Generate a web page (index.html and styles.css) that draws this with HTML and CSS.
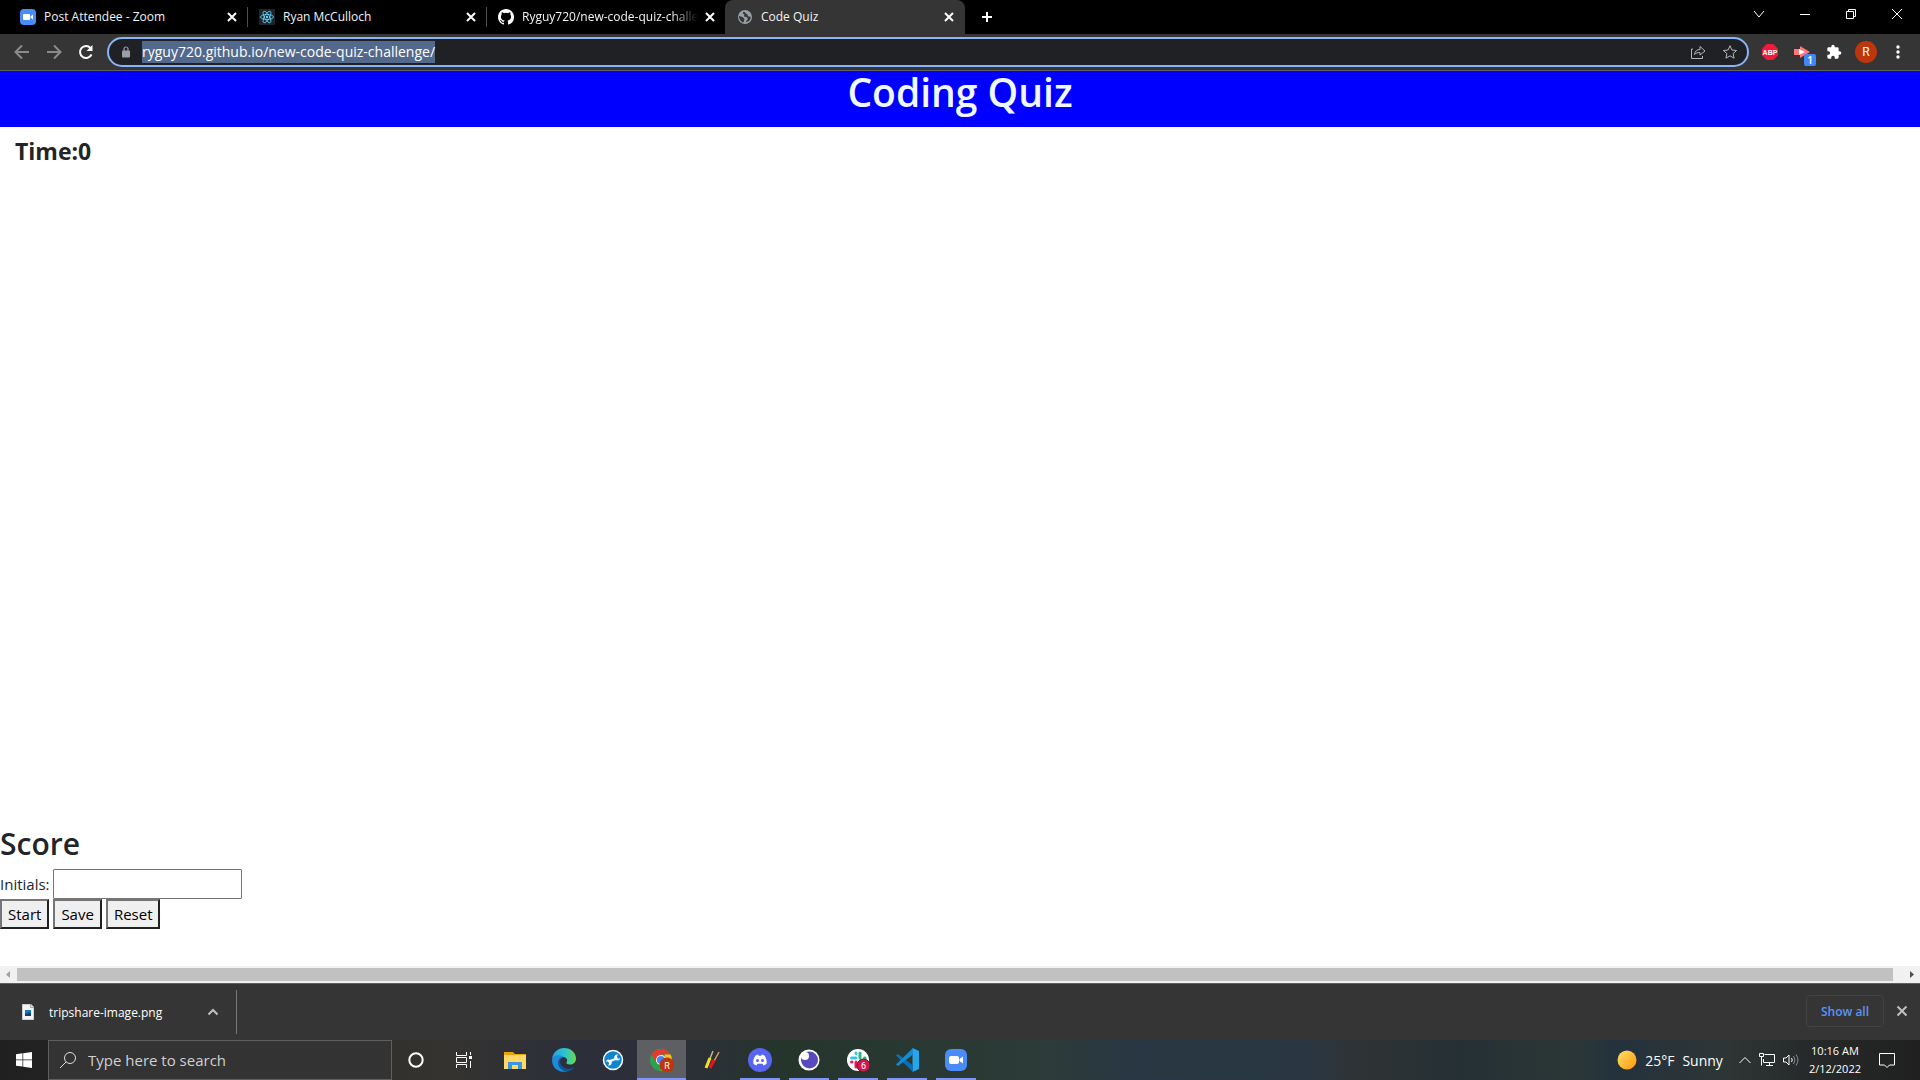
FILE: index.html
```html
<!DOCTYPE html>
<html lang="en">
<head>
<meta charset="utf-8">
<title>Code Quiz</title>
<link rel="stylesheet" href="styles.css">
</head>
<body>
<div class="desktop">
  <header class="browser">
    <div class="tabstrip">
      <div class="tab">
        <svg class="favicon" viewBox="0 0 16 16"><rect width="16" height="16" rx="4" fill="#4a8cf7"/><rect x="3" y="5" width="7" height="6" rx="1" fill="#fff"/><path d="M10.500 7.500 13 5.500v5l-2.500-2z" fill="#fff"/></svg>
        <span class="tab-title">Post Attendee - Zoom</span>
        <button class="icon-btn tab-close" aria-label="Close tab"><svg viewBox="0 0 10 10"><path d="M1 1l8 8M9 1 1 9"/></svg></button>
      </div>
      <div class="tab divided">
        <svg class="favicon" viewBox="0 0 16 16"><rect width="16" height="16" rx="1" fill="#20232a"/><g fill="none" stroke="#61dafb" stroke-width=".8"><ellipse cx="8" cy="8" rx="6.500" ry="2.500"/><ellipse cx="8" cy="8" rx="6.500" ry="2.500" transform="rotate(60 8 8)"/><ellipse cx="8" cy="8" rx="6.500" ry="2.500" transform="rotate(120 8 8)"/></g><circle cx="8" cy="8" r="1.200" fill="#61dafb"/></svg>
        <span class="tab-title">Ryan McCulloch</span>
        <button class="icon-btn tab-close" aria-label="Close tab"><svg viewBox="0 0 10 10"><path d="M1 1l8 8M9 1 1 9"/></svg></button>
      </div>
      <div class="tab divided">
        <svg class="favicon" viewBox="0 0 16 16"><path fill="#fff" d="M8 0C3.580 0 0 3.580 0 8c0 3.540 2.290 6.530 5.470 7.590.4.070.55-.17.55-.38 0-.19-.01-.82-.01-1.490-2.010.37-2.530-.49-2.690-.94-.09-.23-.48-.94-.82-1.130-.28-.15-.68-.52-.01-.53.63-.01 1.080.58 1.230.82.72 1.210 1.870.87 2.330.66.07-.52.28-.87.51-1.070-1.780-.2-3.640-.89-3.640-3.950 0-.87.31-1.590.82-2.150-.08-.2-.36-1.020.08-2.120 0 0 .67-.21 2.200.82a7.600 7.600 0 0 1 4 0c1.530-1.040 2.200-.82 2.200-.82.44 1.100.16 1.920.08 2.120.51.56.82 1.270.82 2.150 0 3.070-1.870 3.750-3.650 3.950.29.25.54.73.54 1.480 0 1.070-.01 1.930-.01 2.200 0 .21.15.46.55.38A8 8 0 0 0 16 8c0-4.420-3.580-8-8-8z"/></svg>
        <span class="tab-title faded">Ryguy720/new-code-quiz-challen</span>
        <button class="icon-btn tab-close" aria-label="Close tab"><svg viewBox="0 0 10 10"><path d="M1 1l8 8M9 1 1 9"/></svg></button>
      </div>
      <div class="tab active">
        <svg class="favicon" viewBox="0 0 16 16"><circle cx="8" cy="8" r="7" fill="#9aa0a6"/><path d="M7 2.500C5 4 6 5 7.500 5.500 6.500 7 7 8 9 8c1.500 0 2 1 1.500 2.500L8.500 13c4 0 5.500-3 5-5.500-2 .5-3-.5-3-2L9 4.500zM2 7l3.500 1 2 2-1 3.500C4 13 2 10 2 7z" fill="#35363a"/></svg>
        <span class="tab-title">Code Quiz</span>
        <button class="icon-btn tab-close" aria-label="Close tab"><svg viewBox="0 0 10 10"><path d="M1 1l8 8M9 1 1 9"/></svg></button>
      </div>
      <button class="icon-btn new-tab" aria-label="New tab"><svg viewBox="0 0 12 12"><path d="M6 1v10M1 6h10"/></svg></button>
      <div class="window-controls">
        <button class="icon-btn" aria-label="Search tabs"><svg viewBox="0 0 12 12"><path d="M1 3l5 6 5-6"/></svg></button>
        <button class="icon-btn" aria-label="Minimize"><svg viewBox="0 0 12 12"><path d="M1 6.500h10"/></svg></button>
        <button class="icon-btn" aria-label="Restore"><svg viewBox="0 0 12 12"><path d="M1.500 3.500h7v7h-7zM3.500 3v-1.500h7v7H9"/></svg></button>
        <button class="icon-btn" aria-label="Close"><svg viewBox="0 0 12 12"><path d="M1 1l10 10M11 1 1 11"/></svg></button>
      </div>
    </div>
    <div class="toolbar">
      <button class="icon-btn nav dim" aria-label="Back"><svg viewBox="0 0 16 16"><path d="M15 8H2M8 1.500 1.500 8 8 14.500"/></svg></button>
      <button class="icon-btn nav dim" aria-label="Forward"><svg viewBox="0 0 16 16"><path d="M1 8h13M8 1.500 14.500 8 8 14.500"/></svg></button>
      <button class="icon-btn nav" aria-label="Reload"><svg viewBox="0 0 16 16"><path d="M13.500 10.500A6 6 0 1 1 12.500 4"/><path d="M14.500 1v6h-6z" fill="#fff" stroke="none"/></svg></button>
      <div class="address">
        <svg class="lock" viewBox="0 0 10 12"><rect x="1" y="4.500" width="8" height="7" rx="1" fill="#9aa0a6"/><path d="M3 5V3a2 2 0 0 1 4 0v2" fill="none" stroke="#9aa0a6" stroke-width="1.200"/></svg>
        <span class="url">ryguy720.github.io/new-code-quiz-challenge/</span>
        <button class="icon-btn share" aria-label="Share"><svg viewBox="0 0 16 16"><path d="M3 5H1.500v9.500h11V12M4.500 10.500C5 7 7 5.500 10 5.500V2.500l5 4.500-5 4V8.500c-2.500 0-4 .5-5.500 2z"/></svg></button>
        <button class="icon-btn star" aria-label="Bookmark"><svg viewBox="0 0 16 16"><path d="M8 1.700l1.900 4.300 4.700.5-3.500 3.100 1 4.600L8 11.800l-4.100 2.400 1-4.600L1.400 6.500 6.100 6z"/></svg></button>
      </div>
      <div class="extensions">
        <button class="icon-btn ext" aria-label="Adblock Plus"><svg viewBox="0 0 16 16"><path d="M4.700 0h6.600L16 4.700v6.600L11.300 16H4.700L0 11.300V4.700z" fill="#ee1b3c"/><text x="8" y="10.500" text-anchor="middle" class="abp">ABP</text></svg></button>
        <button class="icon-btn ext" aria-label="Video extension"><svg viewBox="0 0 16 16"><path d="M0 5h6V2l10 6-10 6v-3H0z" fill="#f77"/><path d="M5 5l6 3-6 3z" fill="#fff"/></svg><span class="count">1</span></button>
        <button class="icon-btn ext" aria-label="Extensions"><svg viewBox="0 0 24 24"><path fill="#fff" d="M20.500 11H19V7a2 2 0 0 0-2-2h-4V3.500a2.500 2.500 0 0 0-5 0V5H4a2 2 0 0 0-2 2v3.800h1.500a2.700 2.700 0 0 1 0 5.400H2V20a2 2 0 0 0 2 2h3.800v-1.500a2.700 2.700 0 0 1 5.400 0V22H17a2 2 0 0 0 2-2v-4h1.500a2.500 2.500 0 0 0 0-5z"/></svg></button>
        <button class="avatar" aria-label="Profile">R</button>
        <button class="icon-btn ext menu" aria-label="Menu"><svg viewBox="0 0 16 16"><circle cx="8" cy="3" r="1.700"/><circle cx="8" cy="8" r="1.700"/><circle cx="8" cy="13" r="1.700"/></svg></button>
      </div>
    </div>
  </header>

  <main class="page">
    <h1 class="page-title">Coding Quiz</h1>
    <h2 class="timer">Time:0</h2>
    <section class="quiz">
      <h2 class="score">Score</h2>
      <form>
        <div class="field"><label for="initials">Initials:</label><input id="initials" type="text"></div>
        <div class="actions"><button type="button">Start</button><button type="button">Save</button><button type="button">Reset</button></div>
      </form>
    </section>
  </main>

  <div class="scrollbar">
    <svg viewBox="0 0 17 17"><path d="M10 5v7L6 8.500z" fill="#a3a3a3"/></svg>
    <div class="thumb"></div>
    <svg class="right" viewBox="0 0 17 17"><path d="M7 5v7l4-3.500z" fill="#505050"/></svg>
  </div>

  <div class="downloads">
    <div class="download">
      <svg class="file" viewBox="0 0 12 16"><path d="M0 0h8.500L12 3.500V16H0z" fill="#f4f4f4" stroke="#aaa"/><path d="M8.500 0v3.500H12" fill="#ddd" stroke="#aaa"/><rect x="3" y="6" width="6" height="6" fill="#1976c9"/><path d="M3 12V9l2 1 2-2 2 2v2z" fill="#123d7c"/></svg>
      <span class="filename">tripshare-image.png</span>
      <button class="icon-btn" aria-label="Download options"><svg viewBox="0 0 12 12"><path d="M1.500 8.500 6 4l4.500 4.500"/></svg></button>
    </div>
    <button class="show-all">Show all</button>
    <button class="icon-btn shelf-close" aria-label="Close downloads"><svg viewBox="0 0 12 12"><path d="M1.500 1.500l9 9M10.500 1.500l-9 9"/></svg></button>
  </div>

  <footer class="taskbar">
    <button class="start" aria-label="Start"><svg viewBox="0 0 16 16" fill="#fff"><path d="M0 2.200 6.500 1.300v6.200H0zM7.200 1.200 16 0v7.500H7.200zM0 8.300h6.500v6.300L0 13.700zM7.200 8.300H16V16l-8.800-1.200z"/></svg></button>
    <label class="search">
      <svg viewBox="0 0 18 18"><circle cx="11" cy="7" r="5.500"/><path d="M7 11l-6 6"/></svg>
      <input type="text" placeholder="Type here to search" aria-label="Search">
    </label>
    <div class="shell">
      <button aria-label="Cortana"><svg viewBox="0 0 24 24"><circle cx="12" cy="12" r="6.700" fill="none" stroke="#fff" stroke-width="2"/></svg></button>
      <button aria-label="Task view"><svg viewBox="0 0 24 24" fill="none" stroke="#fff"><path d="M4.500 4v3.500h10V4M4.500 20v-3.500h10V20M4.500 9.500h10v5h-10zM18.500 4v3M18.500 13v7"/><path d="M17 8h3v3h-3z" fill="#fff" stroke="none"/></svg></button>
    </div>
    <nav class="apps" aria-label="Apps">
      <button aria-label="File Explorer"><svg viewBox="0 0 24 24"><path d="M1 4h9l2 2h11v15H1z" fill="#e8a60c"/><path d="M1 7h22v14H1z" fill="#ffd867"/><path d="M5 14h14v7h-4v-4H9v4H5z" fill="#3b96dc"/></svg></button>
      <button aria-label="Edge"><svg viewBox="0 0 24 24"><defs><linearGradient id="edge-top" x1="0" x2="1"><stop stop-color="#249fe5"/><stop offset=".55" stop-color="#2ec4d0"/><stop offset="1" stop-color="#68db46"/></linearGradient></defs><path d="M0 11C1 4 6 0 12 0c7 0 12 5 12 10.500 0 4-3 6-6 6-2.500 0-4-1-3.500-2 1.500-2 .5-5-3-5.500C7 8.500 2 8 0 11z" fill="url(#edge-top)"/><path d="M0 12c1-5 8-6 11.500-3-5 1-5 8-1.500 11.500 2 2 4 3 6 2.500C9 26 0 21 0 12z" fill="#1d8bd8"/><path d="M11.500 9C7 10 7 16 11 19c4 3 9 2 11 0-1.500 3-4 4-6 4.500-5 .5-10-4-10-8.500 0-3 2-5.500 5.500-6z" fill="#10569f"/></svg></button>
      <button aria-label="Support tool"><svg viewBox="0 0 24 24"><circle cx="12" cy="12" r="9.500" fill="#0c86cf" stroke="#fff" stroke-width="1.500"/><g transform="rotate(14 12 12)"><path d="M8 14.500 15.500 9.500" stroke="#fff" stroke-width="2.200"/><path d="M18.500 8.500a3 3 0 1 1-3-3L15 8l1.500 1.500zM5.500 15.500a3 3 0 1 1 3 3L9 16l-1.500-1.500z" fill="#fff"/></g></svg></button>
      <button class="running current" aria-label="Chrome"><svg viewBox="0 0 24 24"><circle cx="11" cy="12" r="11" fill="#2ba24c"/><path d="M1.500 6.500A11 11 0 0 1 20.500 6.500H11L6.500 15z" fill="#e33b2e"/><path d="M20.500 6.500A11 11 0 0 1 11 23l5-8.500-1.500-8z" fill="#fbc116"/><circle cx="11" cy="12" r="5" fill="#fff"/><circle cx="11" cy="12" r="4" fill="#4285f4"/><circle cx="17" cy="17" r="7.500" fill="#bf360c"/><text x="17" y="20.500" text-anchor="middle" class="mini">R</text></svg></button>
      <button aria-label="Drawing tool"><svg viewBox="0 0 24 24"><path d="M8 18 14 3" stroke="#c8b48a" stroke-width="1.500"/><path d="M7 20 11 10" stroke="#f2e51c" stroke-width="3"/><path d="M14 15 20 4" stroke="#d9a060" stroke-width="1.500"/><path d="M11 20 15 12" stroke="#e12" stroke-width="3"/></svg></button>
      <button class="running" aria-label="Discord"><svg viewBox="0 0 24 24"><circle cx="12" cy="12" r="12" fill="#5865f2"/><path d="M7.500 7.500 10 6.500l.7 1.200h2.600l.7-1.200 2.500 1c2 3 2.500 5.500 2 8.500L15.500 17.500l-1-1.700h-5l-1 1.700L5.500 16c-.5-3 0-5.500 2-8.500z" fill="#fff"/><circle cx="9.500" cy="12.500" r="1.500" fill="#5865f2"/><circle cx="14.500" cy="12.500" r="1.500" fill="#5865f2"/></svg></button>
      <button class="running" aria-label="Insomnia"><svg viewBox="0 0 24 24"><circle cx="12" cy="12" r="10.500" fill="#fff"/><circle cx="12.500" cy="12" r="8.500" fill="#5849be"/><circle cx="8" cy="8" r="4" fill="#fff"/></svg></button>
      <button class="running" aria-label="Slack"><svg viewBox="0 0 24 24"><circle cx="12" cy="12" r="11" fill="#fff"/><g stroke-width="3" stroke-linecap="round"><path d="M5.500 10h4.500M10 5v.500" stroke="#36c5f0"/><path d="M14 5v5M18.500 10h.500" stroke="#2eb67d"/><path d="M14 14h4.500" stroke="#ecb22e"/><path d="M10 14v5M5.500 14h.500" stroke="#e01e5a"/></g><circle cx="17.500" cy="17.500" r="6.500" fill="#d4164f" stroke="#333"/><text x="17.500" y="21" text-anchor="middle" class="mini">6</text></svg></button>
      <button class="running" aria-label="Visual Studio Code"><svg viewBox="0 0 24 24"><path d="M17.500 0 24 3v18l-6.500 3z" fill="#28a4ea"/><path d="M1 7.500 3 6l15 11.500V24z" fill="#0b70b9"/><path d="M1 16.500 3 18l15-11.500V0z" fill="#168bd3"/></svg></button>
      <button class="running" aria-label="Zoom"><svg viewBox="0 0 24 24"><rect x="1" y="1" width="22" height="22" rx="6" fill="#4a8cf7"/><rect x="5" y="8" width="10" height="8" rx="2" fill="#fff"/><path d="M15.500 11 19 8.500v7L15.500 13z" fill="#fff"/></svg></button>
    </nav>
    <div class="tray">
      <span class="weather"><svg viewBox="0 0 20 20"><defs><linearGradient id="sun" x2="1" y2="1"><stop stop-color="#ffe169"/><stop offset="1" stop-color="#ff9608"/></linearGradient></defs><circle cx="10" cy="10" r="9.500" fill="url(#sun)"/></svg><span>25°F</span><span>Sunny</span></span>
      <button class="icon-btn" aria-label="Hidden icons"><svg viewBox="0 0 12 12"><path d="M.5 9 6 3.500 11.500 9"/></svg></button>
      <svg class="glyph" viewBox="0 0 16 16"><path d="M5.500 2.500h10v8h-11V7M10.500 10.500v3M7 13.500h7M.500 1.500h4v3h-4zM2.500 4.500v9"/></svg>
      <svg class="glyph" viewBox="0 0 16 16"><path d="M.500 6v4h2.500l3 3V3L3 6zM8.500 6q1.500 2 0 4"/><path d="M10.500 4q3 4 0 8M13 2.500q4 5.500 0 11" stroke="#889"/></svg>
      <time class="clock"><span>10:16 AM</span><span>2/12/2022</span></time>
      <button class="icon-btn notice" aria-label="Notifications"><svg viewBox="0 0 16 16"><path d="M.5 1.500h15v11.500h-5L8 15.500 5.500 13h-5z"/></svg></button>
    </div>
  </footer>
</div>
</body>
</html>
```
FILE: styles.css
```css
* { box-sizing: border-box; }
body { margin: 0; font-family: "Open Sans", "Noto Sans", sans-serif; font-size: 12px; color: #212529; }
h1, h2 { margin: 0; font-weight: 600; }
button { font: inherit; color: inherit; padding: 0; border: 0; background: none; }
svg { display: block; flex: none; }
.desktop { display: flex; flex-direction: column; min-height: 100vh; background: #fff; }

.icon-btn { display: flex; align-items: center; justify-content: center; flex: none; }
.icon-btn svg { width: 12px; height: 12px; fill: none; stroke: #fff; }

.tabstrip { display: flex; height: 34px; background: #000; color: #f1f3f4; }
.tab { display: flex; align-items: center; width: 239px; padding: 0 1px 0 20px; }
.tab.divided { background: linear-gradient(#4a4d51, #4a4d51) 8px center / 1px 20px no-repeat; }
.tab.active { width: 240px; background: #353535; border-radius: 8px 8px 0 0; padding: 0 10px 0 12px; margin-left: 8px; }
.favicon { width: 16px; height: 16px; margin-right: 8px; }
.tab-title { flex: 1; min-width: 0; overflow: hidden; white-space: nowrap; font-size: 12px; line-height: 16px; }
.tab-title.faded { mask-image: linear-gradient(90deg, #000 85%, transparent); }
.tab-close { width: 12px; height: 16px; margin-left: 6px; }
.tab-close svg { width: 10px; height: 10px; stroke-width: 2; }
.new-tab { width: 44px; }
.new-tab svg { stroke-width: 2; }
.window-controls { display: flex; margin-left: auto; }
.window-controls .icon-btn { width: 46px; height: 28px; }

.toolbar { display: flex; align-items: center; height: 37px; background: #353535; border-bottom: 1px solid #5f5f5f; padding: 0 6px; }
.nav { width: 32px; height: 32px; }
.nav svg { width: 16px; height: 16px; stroke-width: 2; }
.nav.dim svg { stroke: #8a8a8a; }
.address { flex: 1; display: flex; align-items: center; height: 30px; margin: 0 5px; padding: 0 9px 0 12px; border: 2px solid #8ab4f8; border-radius: 15px; background: #202124; }
.lock { width: 10px; height: 12px; margin-right: 11px; }
.url { font-size: 14px; line-height: 22px; color: #fff; background: #53698b; white-space: nowrap; }
.address .icon-btn { width: 16px; }
.address .icon-btn svg { width: 16px; height: 16px; stroke: #b4b6ba; }
.address .share { margin: 0 16px 0 auto; }
.extensions { display: flex; align-items: center; }
.ext { width: 32px; height: 32px; position: relative; }
.ext svg { width: 16px; height: 16px; stroke: none; }
.menu svg { fill: #fff; }
.abp { font: bold 7px "Liberation Sans", sans-serif; fill: #fff; }
.count { position: absolute; right: 2px; bottom: 2px; width: 12px; height: 12px; border-radius: 2px; background: #4285f4; color: #fff; font-size: 10px; font-weight: 600; line-height: 12px; }
.avatar { width: 22px; height: 22px; margin: 0 5px; border-radius: 50%; background: #bf360c; color: #fff; font: 12px Roboto, sans-serif; }

.page { flex: 1; display: flex; flex-direction: column; }
.page-title { height: 56px; background: #00f; color: #f0f8ff; font-size: 39px; line-height: 42px; text-align: center; }
.timer { padding: 8px 15px; font-size: 23px; font-weight: 700; line-height: 32px; }
.quiz { margin-top: auto; padding-bottom: 37px; font-size: 15px; }
.score { font-size: 30px; line-height: 38px; margin-bottom: 6px; }
.field, .actions { display: flex; align-items: center; gap: 4px; height: 30px; }
.field label { width: 49px; }
.field input { width: 189px; height: 30px; border: 1px solid #767676; border-radius: 1px; padding: 2px; font: inherit; }
.actions button { height: 30px; padding: 0 6px; border: 2px solid; border-color: #767676 #212121 #212121 #767676; background: #efefef; color: #000; line-height: 24px; }

.scrollbar { display: flex; align-items: center; height: 17px; background: #f1f1f1; }
.scrollbar svg { width: 17px; height: 17px; }
.thumb { flex: 1; height: 13px; margin-right: 10px; background: #c1c1c1; }

.downloads { display: flex; align-items: center; height: 57px; padding-right: 12px; border-top: 1px solid #5f6161; background: #353535; color: #fff; }
.download { display: flex; align-items: center; width: 237px; height: 44px; padding: 0 17px 0 22px; border-right: 1px solid #777; }
.file { width: 12px; height: 16px; margin-right: 15px; }
.filename { font-size: 12px; }
.download .icon-btn { margin-left: auto; }
.download .icon-btn svg, .shelf-close svg { stroke: #c0c0c0; stroke-width: 2; }
.show-all { width: 78px; height: 32px; margin: 0 12px 2px auto; border: 1px solid #424242; border-radius: 4px; color: #5a94f4; font-weight: 600; font-size: 12px; }
.shelf-close { margin-bottom: 2px; }

.taskbar { display: flex; height: 40px; color: #fff; background: linear-gradient(90deg, #202020 0, #34332f 23%, #2c2f3a 30%, #2c2f3a 35%, #25352c 41%, #2d3b38 54%, #293744 59%, #2a3742 68%, #2e3334 71%, #253035 76%, #2b3736 82%, #24323d 84%, #2e3535 90%, #272a2a 94%, #202020); }
.start { width: 48px; display: grid; place-items: center; }
.start svg { width: 16px; height: 16px; }
.search { display: flex; align-items: center; width: 344px; padding-left: 10px; border: 1px solid #5f5f5f; background: #333; }
.search svg { width: 18px; height: 18px; fill: none; stroke: #ddd; }
.search input { flex: 1; min-width: 0; margin-left: 11px; padding: 0; border: 0; background: none; color: #fff; font: 15px "Open Sans", sans-serif; }
.search input::placeholder { color: #d0d0d0; opacity: 1; }
.shell, .apps { display: flex; }
.shell { margin-right: 2px; }
.shell button, .apps button { display: grid; place-items: center; width: 49px; }
.shell button { width: 48px; }
.shell svg, .apps svg { width: 24px; height: 24px; }
.apps .running { background: linear-gradient(#8194f8, #8194f8) center bottom / 40px 2px no-repeat; }
.apps .current { background: linear-gradient(#8194f8, #8194f8) center bottom / 49px 2px no-repeat, #5e5f63; }
.mini { font: 9px Roboto, sans-serif; fill: #fff; }
.tray { display: flex; align-items: center; margin-left: auto; gap: 8px; padding-right: 25px; }
.weather { display: flex; align-items: center; gap: 8px; font-size: 14px; margin-right: 8px; }
.weather svg { width: 20px; height: 20px; }
.glyph { width: 16px; height: 16px; fill: none; stroke: #fff; }
.glyph + .glyph { margin-right: 2px; }
.clock { display: flex; flex-direction: column; align-items: center; font-size: 11px; line-height: 18px; }
.notice { margin-left: 10px; }
.notice svg { width: 16px; height: 16px; }
```
